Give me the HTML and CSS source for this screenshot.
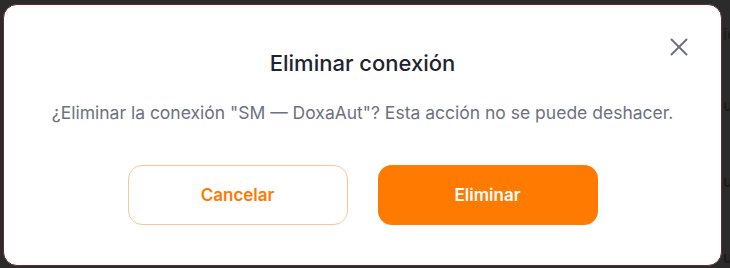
FILE: index.html
```html
<!DOCTYPE html>
<html lang="es">
<head>
<meta charset="utf-8">
<title>Eliminar conexión</title>
<link rel="stylesheet" href="styles.css">
</head>
<body>
<div class="stage">
  <div class="modal" role="dialog" aria-labelledby="t">
    <button class="close" aria-label="Cerrar">
      <svg width="24" height="24" viewBox="0 0 24 24" fill="none" stroke="currentColor" stroke-width="2" stroke-linecap="round"><path d="M4.5 4.5 L19.5 19.5 M19.5 4.5 L4.5 19.5"/></svg>
    </button>
    <h2 id="t" class="title">Eliminar conexión</h2>
    <p class="msg">¿Eliminar la conexión "SM — DoxaAut"? Esta acción no se puede deshacer.</p>
    <div class="actions">
      <button class="btn btn-ghost">Cancelar</button>
      <button class="btn btn-primary">Eliminar</button>
    </div>
  </div>
  <div class="behind">
    <span class="b1">ic</span>
    <span class="b2">u</span>
    <span class="b3">u</span>
    <span class="b4">u</span>
  </div>
</div>
</body>
</html>
```

FILE: styles.css
```css
* { box-sizing: border-box; }
html, body { margin: 0; padding: 0; }
body {
  width: 730px;
  height: 268px;
  overflow: hidden;
  background: #2b2b2b;
  font-family: Inter, "Noto Sans", sans-serif;
}
.stage {
  display: flex;
  align-items: flex-start;
  padding: 4px 0 0 3px;
  height: 268px;
}
.modal {
  position: relative;
  flex: 0 0 719px;
  height: 262px;
  background: #ffffff;
  border: 1px solid #6a2a2e;
  border-radius: 14px;
  padding: 44px 0 0;
  display: flex;
  flex-direction: column;
  align-items: center;
}
.close {
  position: absolute;
  top: 30px;
  right: 30px;
  width: 24px;
  height: 24px;
  padding: 0;
  border: 0;
  background: none;
  color: #6b7280;
  display: flex;
}
.title {
  margin: 0;
  font-size: 22px;
  line-height: 28px;
  font-weight: 500;
  color: #1e2330;
}
.msg {
  margin: 24px 0 0;
  font-size: 17.5px;
  line-height: 24px;
  color: #6b7280;
}
.actions {
  margin-top: 40px;
  display: flex;
  gap: 30px;
}
.btn {
  width: 220px;
  height: 60px;
  border-radius: 14px;
  font-family: inherit;
  font-size: 17px;
  font-weight: 600;
  cursor: pointer;
}
.btn-ghost {
  background: #ffffff;
  border: 1px solid #fec596;
  color: #ff7a00;
}
.btn-primary {
  background: #ff7a00;
  border: 0;
  color: #ffffff;
}
.behind {
  flex: 1;
  overflow: hidden;
  display: flex;
  flex-direction: column;
  font-size: 16px;
  font-weight: 600;
  color: #1a1a1a;
  padding-left: 1px;
}
.behind span { line-height: 16px; white-space: nowrap; }
.b1 { margin-top: 22px; }
.b2 { margin-top: 55px; }
.b3 { margin-top: 60px; }
.b4 { margin-top: 60px; }
```
